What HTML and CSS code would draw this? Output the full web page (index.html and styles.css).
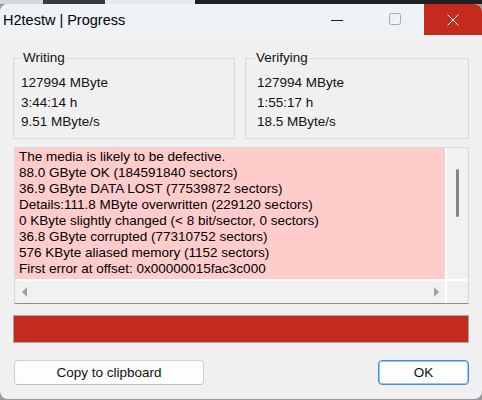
FILE: index.html
```html
<!DOCTYPE html>
<html>
<head>
<meta charset="utf-8">
<title>H2testw | Progress</title>
<link rel="stylesheet" href="styles.css">
</head>
<body>
<div class="strip"><span class="s1"></span><span class="s2"></span><span class="s3"></span><span class="s4"></span></div>
<div class="window">
  <div class="titlebar">
    <div class="title">H2testw | Progress</div>
    <div class="caption">
      <div class="cbtn"><svg width="12" height="12" viewBox="0 0 12 12"><line x1="0" y1="6.5" x2="12" y2="6.5" stroke="#1b1b1b" stroke-width="1"/></svg></div>
      <div class="cbtn"><svg width="13" height="13" viewBox="0 0 13 13"><rect x="0.5" y="0.5" width="11" height="11" rx="2" fill="none" stroke="#a8a8a8" stroke-width="1"/></svg></div>
      <div class="cbtn close"><svg width="12" height="12" viewBox="0 0 12 12"><path d="M0.5 0.5 L11.5 11.5 M11.5 0.5 L0.5 11.5" stroke="#ffffff" stroke-width="1" fill="none"/></svg></div>
    </div>
  </div>
  <div class="content">
    <div class="groups">
      <div class="group g-write">
        <span class="glabel">Writing</span>
        <div class="gline">127994 MByte</div>
        <div class="gline">3:44:14 h</div>
        <div class="gline">9.51 MByte/s</div>
      </div>
      <div class="group g-verify">
        <span class="glabel">Verifying</span>
        <div class="gline">127994 MByte</div>
        <div class="gline">1:55:17 h</div>
        <div class="gline">18.5 MByte/s</div>
      </div>
    </div>
    <div class="memo">
      <div class="memo-text">
        <div>The media is likely to be defective.</div>
        <div>88.0 GByte OK (184591840 sectors)</div>
        <div>36.9 GByte DATA LOST (77539872 sectors)</div>
        <div>Details:111.8 MByte overwritten (229120 sectors)</div>
        <div>0 KByte slightly changed (&lt; 8 bit/sector, 0 sectors)</div>
        <div>36.8 GByte corrupted (77310752 sectors)</div>
        <div>576 KByte aliased memory (1152 sectors)</div>
        <div>First error at offset: 0x00000015fac3c000</div>
      </div>
      <div class="vscroll"><div class="thumb"></div></div>
      <div class="hscroll"><span class="arrow-left"></span><span class="arrow-right"></span></div>
      <div class="corner"></div>
    </div>
    <div class="progress"><div class="fill" style="width:100%"></div></div>
    <div class="buttons">
      <button class="btn copy">Copy to clipboard</button>
      <button class="btn ok">OK</button>
    </div>
  </div>
</div>
</body>
</html>
```

FILE: styles.css
```css
html, body {
  margin: 0;
  padding: 0;
}
body {
  width: 482px;
  height: 400px;
  overflow: hidden;
  background: #9a9a9a;
  font-family: "Liberation Sans", Arial, sans-serif;
  color: #111;
}
.strip {
  display: flex;
  height: 4px;
}
.strip span { display: block; height: 4px; }
.s1 { width: 43px; background: #d8d8d8; }
.s2 { width: 62px; background: #3a3a3a; }
.s3 { width: 90px; background: #e9e9e9; }
.s4 { flex: 1; background: #202020; }

.window {
  height: 395px;
  background: #f0f0f0;
  border-radius: 8px;
  overflow: hidden;
  display: flex;
  flex-direction: column;
}
.titlebar {
  height: 31px;
  flex: none;
  background: #eef3f8;
  display: flex;
}
.title {
  flex: 1;
  align-self: center;
  padding-left: 3px;
  font-size: 14.5px;
  line-height: 18px;
  color: #000;
}
.caption { display: flex; }
.cbtn {
  width: 58px;
  display: flex;
  align-items: center;
  justify-content: center;
}
.cbtn svg { display: block; }
.close { background: #c42b1c; }

.content {
  padding: 23px 13px 0 13px;
}
.groups {
  display: grid;
  grid-template-columns: 222px 224px;
  column-gap: 10px;
}
.group {
  position: relative;
  box-sizing: border-box;
  height: 81px;
  border: 1px solid #d9d9d9;
  padding-top: 14px;
  font-size: 13.5px;
}
.g-write { padding-left: 7px; }
.g-verify { padding-left: 11px; }
.glabel {
  position: absolute;
  top: -9px;
  left: 7px;
  padding: 0 2px;
  background: #f0f0f0;
  line-height: 16px;
}
.g-verify .glabel { left: 8px; }
.gline {
  line-height: 19.5px;
  white-space: nowrap;
}

.memo {
  margin-top: 8px;
  margin-left: 1px;
  width: 455px;
  box-sizing: border-box;
  border: 1px solid #d9d9d9;
  border-bottom-color: #8c8c8c;
  background: #ffffff;
  display: grid;
  grid-template-columns: 430px 23px;
  grid-template-rows: 131px 24px;
}
.memo-text {
  background: #ffcccc;
  overflow: hidden;
  white-space: nowrap;
  padding: 1px 0 0 4px;
  font-size: 13.5px;
  line-height: 16px;
  color: #000;
}
.vscroll {
  border-left: 2px solid #ffffff;
  background: #f1f1f1;
  padding: 21px 0 0 9px;
}
.thumb {
  width: 3px;
  height: 48px;
  border-radius: 2px;
  background: #868686;
}
.hscroll {
  border-top: 2px solid #ffffff;
  background: #f1f1f1;
  display: flex;
  align-items: center;
  justify-content: space-between;
  padding: 0 6px 0 7px;
}
.arrow-left {
  width: 0;
  height: 0;
  border-top: 5px solid transparent;
  border-bottom: 5px solid transparent;
  border-right: 5px solid #a3a3a3;
}
.arrow-right {
  width: 0;
  height: 0;
  border-top: 5px solid transparent;
  border-bottom: 5px solid transparent;
  border-left: 5px solid #a3a3a3;
}
.corner {
  background: #f1f1f1;
  border-left: 2px solid #ffffff;
  border-top: 2px solid #ffffff;
}

.progress {
  margin-top: 11px;
  height: 28px;
  box-sizing: border-box;
  border: 1px solid #a6a6a6;
  background: #e6e6e6;
}
.fill {
  height: 100%;
  background: #c22b1e;
}

.buttons {
  margin-top: 17px;
  display: flex;
  justify-content: space-between;
}
.btn {
  height: 25px;
  box-sizing: border-box;
  background: #fdfdfd;
  border: 1px solid #d0d0d0;
  border-bottom-color: #bdbdbd;
  border-radius: 4px;
  font-family: "Liberation Sans", Arial, sans-serif;
  font-size: 13.5px;
  color: #111;
  padding: 0;
}
.copy {
  margin-left: 1px;
  width: 190px;
}
.ok {
  width: 91px;
  border: 1px solid #3f8fdd;
  box-shadow: inset 0 0 0 1px #9cc6ee;
}
```
